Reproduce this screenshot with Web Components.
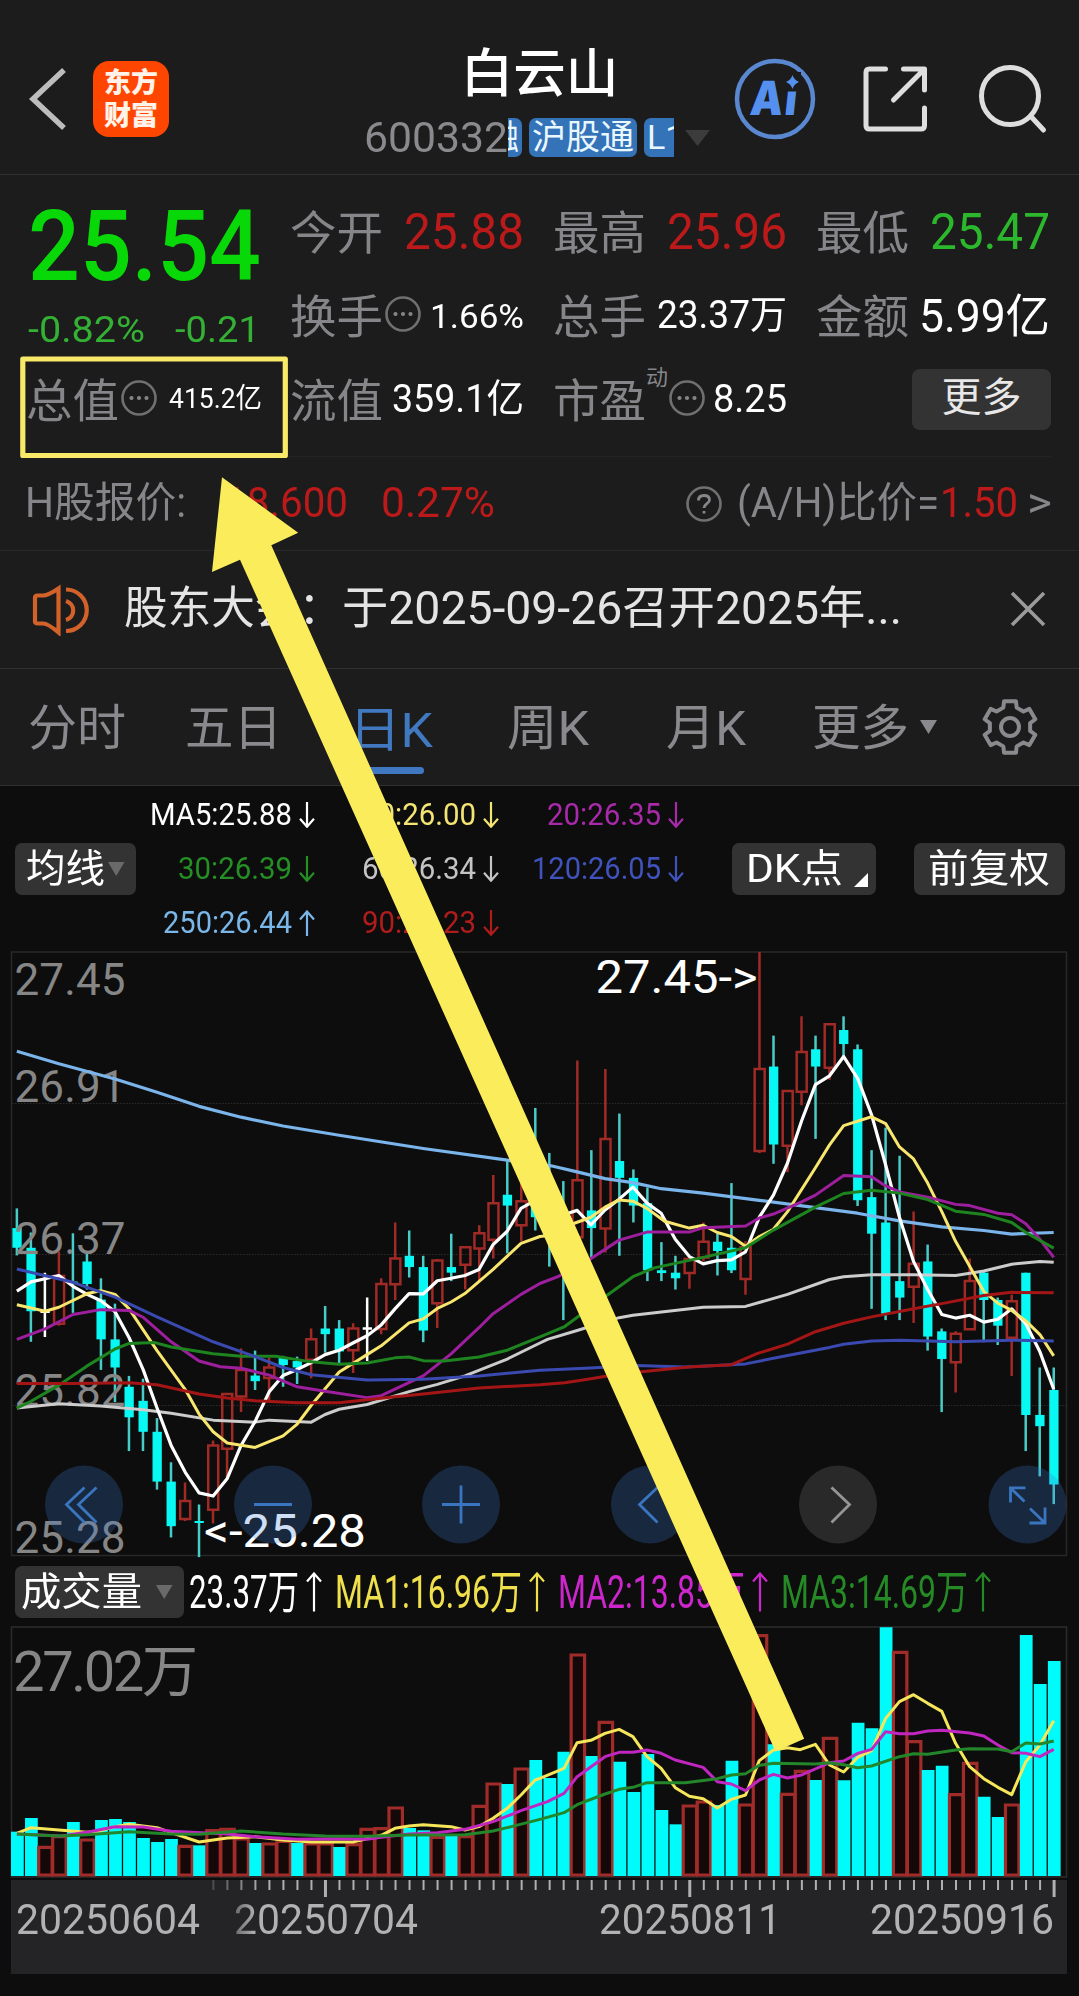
<!DOCTYPE html>
<html lang="zh-CN">
<head>
<meta charset="UTF-8">
<title>白云山 600332</title>
<style>
	body {
		margin: 0;
		background: #0d0d0d;
		font-family: Roboto, "Noto Sans CJK SC", sans-serif;
	}
</style>
</head>
<body>
<stock-page></stock-page>

<script>
// Text that is squeezed or stretched to a fixed width
class FitText extends HTMLElement {
	constructor() {
		super();
		this.attachShadow({ mode: 'open' });
	}

	connectedCallback() {
		const width = Number(this.getAttribute('w'));
		this.shadowRoot.innerHTML = `
		<style>
		:host { display: block; flex: none; width: ${width}px; line-height: 1; white-space: nowrap; }
		span { display: inline-block; transform-origin: 0 50%; vertical-align: top; }
		</style>
		<span><slot></slot></span>
		`;
		const span = this.shadowRoot.querySelector('span');
		const real = span.getBoundingClientRect().width;
		if (real > 0) {
			span.style.transform = `scaleX(${width / real})`;
		}
	}
}

class StockHeader extends HTMLElement {
	constructor() {
		super();
		this.attachShadow({ mode: 'open' });
	}

	connectedCallback() {
		this.shadowRoot.innerHTML = `
		<style>
		:host { display: flex; height: 174px; background: #1c1c1c; border-bottom: 1px solid #303030; }
		svg { display: block; flex: none; }
		.back { margin: 64px 0 0 27px; }
		.logo {
			width: 76px; height: 76px; margin: 61px 0 0 24px; box-sizing: border-box; padding-top: 6px;
			border-radius: 16px; background: #ff4600; color: #fff3ea;
			font-weight: 900; font-size: 27px; line-height: 33px; text-align: center;
		}
		.name { width: 347px; margin-left: 197px; padding-top: 48px; display: flex; flex-direction: column; align-items: center; }
		.name h1 { margin: 0; color: #fff; font-size: 52.500px; line-height: 52px; font-weight: 500; }
		.sub { display: flex; align-items: center; width: 100%; height: 39px; margin-top: 18px; }
		.code { font-size: 43px; color: #8a8a8e; margin-left: -2px; }
		.tags { width: 166px; height: 39px; overflow: hidden; display: flex; gap: 7px; }
		.tag { flex: none; box-sizing: border-box; height: 39px; padding: 0 3px; border-radius: 7px; background: #3573b9; color: #e9f7ff; font-size: 34px; line-height: 38px; }
		.tag:first-child { margin-left: -26px; }
		.tag:last-child { padding-left: 3px; }
		.down { margin-left: 11px; }
		.ai { margin: 58px 0 0 21px; }
		.share { margin: 64px 0 0 46px; }
		.search { margin: 62px 0 0 45px; }
		</style>
		<svg class="back" width="42" height="70" viewBox="0 0 42 70"><path d="M37 6 6 35 37 64" fill="none" stroke="#bdbdbd" stroke-width="5.500"/></svg>
		<div class="logo">东方<br>财富</div>
		<div class="name">
			<h1>白云山</h1>
			<div class="sub">
				<fit-text class="code" w="144">600332</fit-text>
				<div class="tags"><div class="tag">融</div><div class="tag">沪股通</div><div class="tag">L1</div></div>
				<svg class="down" width="26" height="18"><path d="M0 1h25L12.500 17z" fill="#3c3c3c"/></svg>
			</div>
		</div>
		<svg class="ai" width="82" height="82" viewBox="0 0 82 82">
			<circle cx="41" cy="41" r="38" fill="none" stroke="#5a88d0" stroke-width="4.500"/>
			<text transform="translate(15 57) skewX(-6) scale(.88 1)" font-family="Inter" font-weight="900" font-size="47" fill="#5590ee">A<tspan dx="2">i</tspan></text>
			<path d="M49 14h18v19.500H49z" fill="#1c1c1c"/>
			<path d="M58.500 17q1.500 5 6.500 7q-5 2-6.500 7q-1.500-5-6.500-7q5-2 6.500-7z" fill="#5590ee"/>
		</svg>
		<svg class="share" width="70" height="70" viewBox="0 0 70 70" fill="none" stroke="#dedede" stroke-width="5" stroke-linecap="round" stroke-linejoin="round">
			<path d="M23.500 5H7.500Q4 5 4 8.500V61.500Q4 65 7.500 65H59Q62.500 65 62.500 61.500V44M41.500 5H62.500V26M61.500 6 31.500 36"/>
		</svg>
		<svg class="search" width="72" height="74" viewBox="0 0 72 74" fill="none" stroke="#dedede" stroke-width="5" stroke-linecap="round">
			<circle cx="33" cy="34" r="28.500"/><path d="M53.500 54 66.500 68"/>
		</svg>
		`;
	}
}

// Small round icon with three dots or a question mark
class HintIcon extends HTMLElement {
	constructor() {
		super();
		this.attachShadow({ mode: 'open' });
	}

	connectedCallback() {
		const mark = this.hasAttribute('question')
			? '<path d="M13.500 15.500q0-5 5.500-5t5.500 4.500c0 3.500-5.500 4-5.500 8M19 26v2.500" fill="none" stroke="#86868a" stroke-width="2.800"/>'
			: '<g fill="#86868a"><circle cx="11.500" cy="19" r="2.100"/><circle cx="19" cy="19" r="2.100"/><circle cx="26.500" cy="19" r="2.100"/></g>';
		this.shadowRoot.innerHTML = `
		<style>
		:host { display: block; flex: none; width: 38px; height: 38px; }
		</style>
		<svg width="38" height="38"><circle cx="19" cy="19" r="16.500" fill="none" stroke="#707072" stroke-width="2.600"/>${mark}</svg>
		`;
	}
}

// One label with its value at the right end
class QuoteItem extends HTMLElement {
	constructor() {
		super();
		this.attachShadow({ mode: 'open' });
	}

	connectedCallback() {
		const sup = this.getAttribute('sup');
		this.shadowRoot.innerHTML = `
		<style>
		:host { display: flex; align-items: center; height: 84px; color: #fff; }
		.label { font-size: 46px; color: #86868a; padding-top: 3px; margin-left: -2px; }
		.sup { align-self: flex-start; font-size: 22px; line-height: 1; color: #86868a; margin: 10px -1px 0 0; }
		hint-icon { margin: -3px 0 0 1px; }
		.value { margin-left: auto; padding-top: 1px; }
		</style>
		<fit-text class="label" w="93">${this.getAttribute('label')}</fit-text>
		${sup ? `<span class="sup">${sup}</span>` : ''}
		${this.hasAttribute('hint') ? '<hint-icon></hint-icon>' : ''}
		<div class="value"><slot></slot></div>
		`;
	}
}

class QuotePanel extends HTMLElement {
	constructor() {
		super();
		this.attachShadow({ mode: 'open' });
	}

	connectedCallback() {
		this.shadowRoot.innerHTML = `
		<style>
		:host { display: block; background: #1c1c1c; height: 376px; border-bottom: 1px solid #282828; box-sizing: border-box; }
		.top { display: flex; gap: 30px; height: 281px; padding: 14px 28px 0; box-sizing: border-box; }
		.left { width: 234px; }
		.price { height: 112px; display: flex; align-items: center; font-size: 98px; font-weight: 500; color: #08d808; padding-top: 3px; box-sizing: border-box; }
		.change { height: 56px; display: flex; align-items: center; justify-content: space-between; font-size: 37.500px; color: #34b034; padding-right: 2px; padding-top: 1px; box-sizing: border-box; }
		.grid { display: grid; grid-template-columns: repeat(3, 232px); grid-auto-rows: 84px; align-content: start; column-gap: 31px; }
		.up { color: #bc1a1a; }
		.down { color: #2cb82c; }
		.more { justify-self: end; align-self: center; width: 139px; height: 61px; margin-right: -1px; border-radius: 8px; background: #333; color: #e8e8e8; font-size: 40px; line-height: 58px; text-align: center; }
		.h { display: flex; align-items: center; height: 92px; margin: 0 27px; border-top: 1px solid #222; font-size: 42px; color: #86868a; }
		</style>
		<div class="top">
			<div class="left">
				<div class="price"><fit-text w="233">25.54</fit-text></div>
				<div class="change"><fit-text w="117">-0.82%</fit-text><fit-text w="85">-0.21</fit-text></div>
				<quote-item label="总值" hint><fit-text w="93" style="font-size:28.500px">415.2亿</fit-text></quote-item>
			</div>
			<div class="grid">
				<quote-item label="今开"><fit-text class="up" w="120" style="font-size:50px">25.88</fit-text></quote-item>
				<quote-item label="最高"><fit-text class="up" w="120" style="font-size:50px">25.96</fit-text></quote-item>
				<quote-item label="最低"><fit-text class="down" w="120" style="font-size:50px">25.47</fit-text></quote-item>
				<quote-item label="换手" hint><fit-text w="94" style="font-size:34px">1.66%</fit-text></quote-item>
				<quote-item label="总手"><fit-text w="130" style="font-size:39px">23.37万</fit-text></quote-item>
				<quote-item label="金额"><fit-text w="131" style="font-size:46px">5.99亿</fit-text></quote-item>
				<quote-item label="流值"><fit-text w="132" style="font-size:39px">359.1亿</fit-text></quote-item>
				<quote-item label="市盈" sup="动" hint><fit-text w="74" style="font-size:39px">8.25</fit-text></quote-item>
				<div class="more">更多</div>
			</div>
		</div>
		<div class="h">
			<fit-text w="161" style="margin-left:-2px">H股报价:</fit-text>
			<fit-text class="up" w="124" style="margin-left:38px">18.600</fit-text>
			<fit-text class="up" w="114" style="margin-left:33px">0.27%</fit-text>
			<hint-icon question style="margin-left:auto"></hint-icon>
			<fit-text w="202" style="margin-left:14px">(A/H)比价=</fit-text>
			<fit-text class="up" w="78" style="margin-left:1px">1.50</fit-text>
			<fit-text w="25" style="margin-left:9px">&gt;</fit-text>
		</div>
		`;
	}
}

class NoticeBar extends HTMLElement {
	constructor() {
		super();
		this.attachShadow({ mode: 'open' });
	}

	connectedCallback() {
		this.shadowRoot.innerHTML = `
		<style>
		:host { display: flex; align-items: center; height: 117px; background: #1c1c1c; border-bottom: 1px solid #303030; }
		.horn { margin-left: 30px; }
		.text { display: flex; margin: -2px 0 0 32px; font-size: 45.500px; color: #e4e4e4; }
		.close { margin: -1px 32px 0 auto; }
		</style>
		<svg class="horn" width="62" height="52" viewBox="0 0 62 52" fill="none" stroke="#d2622a" stroke-width="4.200">
			<path d="M5 13.500Q5 11.500 8 11.500H13Q18 11.500 28.500 4.500V48.500Q18 39.500 13 39.500H8Q5 39.500 5 37.500Z"/>
			<path d="M36 17A10.500 10 0 0 1 36 36M36 5.500A20.500 20.500 0 0 1 36 47"/>
		</svg>
		<div class="text">
			<fit-text w="218">股东大会：</fit-text>
			<fit-text w="560">于2025-09-26召开2025年...</fit-text>
		</div>
		<svg class="close" width="38" height="38" stroke="#9a9a9a" stroke-width="3.600"><path d="M3 3 35 35M35 3 3 35"/></svg>
		`;
	}
}

class PeriodTabs extends HTMLElement {
	constructor() {
		super();
		this.attachShadow({ mode: 'open' });
	}

	gear() {
		const points = [];
		for (let k = 0; k < 6; k++) {
			[[-19, 20.5], [-13, 26.5], [13, 26.5], [19, 20.5]].forEach(([turn, r]) => {
				const a = (k * 60 - 90 + turn) * Math.PI / 180;
				points.push(`${30 + r * Math.cos(a)},${30 + r * Math.sin(a)}`);
			});
		}
		return points.join(' ');
	}

	connectedCallback() {
		this.shadowRoot.innerHTML = `
		<style>
		:host { display: flex; align-items: center; height: 116px; background: #1c1c1c; border-bottom: 1px solid #303030; font-size: 48.500px; color: #8a8a8e; }
		fit-text { padding-top: 4px; }
		.active { color: #4079c0; }
		.box { display: flex; flex-direction: column; align-items: center; padding-top: 23px; }
		.box i { width: 66px; height: 7px; margin-top: 12px; border-radius: 4px; background: #3f78c0; }
		.arrow { margin-left: 11px; }
		.gear { margin-left: 42px; }
		</style>
		<fit-text w="98" style="margin-left:28px">分时</fit-text>
		<fit-text w="97" style="margin-left:59px">五日</fit-text>
		<div class="box active" style="margin-left:67px"><fit-text w="84">日K</fit-text><i></i></div>
		<fit-text w="82" style="margin-left:74px">周K</fit-text>
		<fit-text w="80" style="margin-left:77px">月K</fit-text>
		<fit-text w="97" style="margin-left:66px">更多</fit-text>
		<svg class="arrow" width="18" height="14"><path d="M0 0h17L8.500 14z" fill="#8a8a8e"/></svg>
		<svg class="gear" width="60" height="60" fill="none" stroke="#8a8a8e" stroke-width="4" stroke-linejoin="round">
			<polygon points="${this.gear()}"/><circle cx="30" cy="30" r="9"/>
		</svg>
		`;
	}
}

// Dark grey button, arrow = "down" or "corner"
class ChipButton extends HTMLElement {
	constructor() {
		super();
		this.attachShadow({ mode: 'open' });
	}

	connectedCallback() {
		const arrow = this.getAttribute('arrow');
		this.shadowRoot.innerHTML = `
		<style>
		:host { display: flex; flex: none; align-items: center; box-sizing: border-box; height: 52px; border-radius: 7px; background: #333; color: #fff; font-size: 39px; }
		.corner { align-self: flex-end; margin: 0 0 8px auto; }
		.down { margin-left: auto; }
		</style>
		<slot></slot>
		${arrow === 'down' ? '<svg class="down" width="17" height="14"><path d="M0 0h16.500L8.200 14z" fill="#6a6a6a"/></svg>' : ''}
		${arrow === 'corner' ? '<svg class="corner" width="14" height="14"><path d="M0 14 14 0V14z" fill="#fff"/></svg>' : ''}
		`;
	}
}

// Value followed by a thin trend arrow
class TrendValue extends HTMLElement {
	constructor() {
		super();
		this.attachShadow({ mode: 'open' });
	}

	connectedCallback() {
		const size = Number(this.getAttribute('size') || 30.5);
		const h = size * 0.86;
		const head = this.getAttribute('dir') === 'up'
			? `M1 9.5 8 1.500 15 9.500M8 2V${h}`
			: `M1 ${h - 9.5} 8 ${h - 1.5} 15 ${h - 9.5}M8 ${h - 2}V0`;
		this.shadowRoot.innerHTML = `
		<style>
		:host { display: flex; align-items: center; justify-content: flex-end; font-size: ${size}px; }
		svg { margin-left: 7px; flex: none; }
		</style>
		<fit-text w="${this.getAttribute('w')}"><slot></slot></fit-text>
		<svg width="16" height="${h}" fill="none" stroke="currentColor" stroke-width="2.200"><path d="${head}"/></svg>
		`;
	}
}

class MaPanel extends HTMLElement {
	constructor() {
		super();
		this.attachShadow({ mode: 'open' });
	}

	connectedCallback() {
		this.shadowRoot.innerHTML = `
		<style>
		:host { display: flex; align-items: center; height: 154px; padding-top: 12px; box-sizing: border-box; }
		.list { display: grid; grid-template-columns: 179px 184px 185px; grid-auto-rows: 54px; width: 548px; }
		</style>
		<chip-button arrow="down" style="width:121px;margin-left:15px;padding:0 11px 0 11px"><fit-text w="79">均线</fit-text></chip-button>
		<div class="list">
			<trend-value w="142" style="color:#fff">MA5:25.88</trend-value>
			<trend-value w="114" style="color:#f3e474">10:26.00</trend-value>
			<trend-value w="114" style="color:#a82aa8">20:26.35</trend-value>
			<trend-value w="114" style="color:#258f25">30:26.39</trend-value>
			<trend-value w="114" style="color:#c4c4c4">60:26.34</trend-value>
			<trend-value w="129" style="color:#4052bc">120:26.05</trend-value>
			<trend-value w="129" dir="up" style="color:#7ab6e8">250:26.44</trend-value>
			<trend-value w="114" style="color:#b01c1c">90:26.23</trend-value>
		</div>
		<chip-button arrow="corner" style="width:144px;margin-left:48px;padding:0 8px 0 14px"><fit-text w="97">DK点</fit-text></chip-button>
		<chip-button style="width:151px;margin-left:38px;padding-left:14px"><fit-text w="122">前复权</fit-text></chip-button>
		`;
	}
}

const STEP = 40.69;
const FIRST = 49;

// kind, high, low, body top, body bottom; d = falling, u = rising, w = flat
const CANDLES = [
	['d', 668, 785, 717, 766], ['d', 728, 1000, 766, 924], ['w', 828, 988, 925, 925], ['u', 775, 960, 836, 955],
	['d', 730, 928, 850, 854], ['d', 778, 870, 800, 856], ['d', 842, 1070, 895, 994], ['d', 905, 1150, 994, 1064],
	['d', 1085, 1272, 1112, 1188], ['d', 1092, 1272, 1147, 1224], ['d', 1190, 1368, 1224, 1348], ['d', 1300, 1487, 1348, 1459],
	['u', 1350, 1446, 1396, 1441], ['d', 1405, 1536, 1446, 1451], ['u', 1246, 1452, 1258, 1418], ['u', 1128, 1340, 1130, 1266],
	['u', 1017, 1175, 1070, 1136], ['d', 1022, 1120, 1084, 1098], ['u', 1040, 1145, 1064, 1090], ['d', 1035, 1112, 1040, 1058],
	['d', 1037, 1105, 1048, 1064], ['u', 967, 1091, 994, 1045], ['d', 911, 1027, 967, 981], ['d', 946, 1055, 967, 1024],
	['u', 954, 1078, 967, 1021], ['w', 890, 1048, 967, 967], ['u', 842, 981, 856, 968], ['u', 703, 896, 793, 857],
	['d', 723, 840, 786, 814], ['d', 786, 1001, 814, 972], ['u', 794, 966, 798, 904], ['d', 731, 849, 814, 828],
	['u', 762, 870, 765, 808], ['u', 710, 850, 730, 768], ['u', 585, 793, 655, 746], ['d', 547, 780, 634, 661],
	['u', 590, 750, 650, 710], ['d', 418, 723, 650, 690], ['d', 530, 813, 620, 700], ['d', 600, 946, 690, 800],
	['u', 300, 760, 598, 740], ['d', 523, 790, 673, 717], ['u', 321, 778, 495, 718], ['d', 432, 786, 550, 592],
	['d', 571, 703, 592, 661], ['d', 616, 849, 655, 822], ['d', 752, 849, 822, 829], ['d', 786, 870, 828, 842],
	['u', 790, 868, 794, 829], ['u', 703, 800, 751, 790], ['d', 730, 835, 751, 774], ['d', 605, 829, 766, 822],
	['u', 750, 883, 765, 844], ['u', 30, 530, 321, 525], ['d', 238, 557, 315, 509], ['u', 375, 578, 376, 512],
	['u', 190, 411, 279, 378], ['d', 238, 495, 272, 315], ['u', 208, 348, 210, 318], ['d', 190, 290, 224, 259],
	['d', 260, 662, 272, 648], ['d', 523, 918, 640, 731], ['d', 467, 946, 703, 931], ['d', 537, 946, 849, 890],
	['u', 676, 953, 806, 863], ['d', 758, 1022, 800, 987], ['d', 967, 1175, 974, 1043], ['u', 974, 1126, 980, 1051],
	['u', 793, 970, 849, 969], ['d', 822, 1001, 828, 896], ['d', 890, 1008, 896, 960], ['u', 883, 1085, 899, 990],
	['d', 828, 1272, 828, 1182], ['d', 1064, 1335, 1182, 1210], ['d', 1064, 1404, 1120, 1355]
];

const PRICE_LINES = [
	['#7ab4ea', 3.2, '49,277 171,308 334,346 456,379 578,414 700,441 822,463 985,486 1229,519 1473,548 1600,562 1676,577 1757,594 1838,604 1920,619 2042,630 2205,648 2368,666 2490,680 2612,699 2735,714 2857,723 2938,732 3060,728'],
	['#ccc', 3, '49,1165 171,1154 293,1160 416,1169 497,1178 619,1195 741,1200 782,1195 904,1200 944,1181 985,1168 1066,1156 1188,1124 1270,1106 1350,1085 1473,1043 1568,1003 1590,994 1676,972 1798,940 1838,934 2042,914 2165,912 2287,882 2409,845 2450,838 2531,833 2653,833 2775,835 2857,824 2938,807 3020,800 3060,802'],
	['#fff', 3.2, '49,874 90,851 131,843 171,835 212,862 253,882 293,898 334,925 375,990 416,1070 456,1165 497,1258 538,1325 578,1376 619,1384 660,1340 700,1258 741,1198 782,1124 822,1084 863,1069 904,1052 944,1032 985,1021 1025,1003 1066,985 1107,958 1147,918 1188,880 1229,881 1270,848 1310,842 1350,835 1391,820 1432,758 1473,725 1513,668 1540,655 1594,690 1650,680 1676,673 1716,709 1757,672 1798,645 1838,615 1879,655 1920,680 1961,745 2002,788 2042,806 2083,798 2124,796 2165,776 2205,690 2246,635 2287,555 2328,450 2368,360 2409,338 2450,290 2491,345 2531,435 2572,560 2612,690 2653,800 2694,870 2735,932 2775,941 2816,934 2857,951 2898,944 2938,918 2979,955 3020,1025 3060,1118'],
	['#f8e66e', 3, '49,908 131,924 171,914 253,880 293,873 334,882 375,918 456,1022 538,1119 578,1180 619,1224 660,1252 741,1263 822,1234 863,1205 904,1158 985,1075 1066,1032 1107,1010 1188,953 1229,943 1270,917 1310,901 1350,880 1432,820 1513,755 1568,738 1600,735 1668,705 1716,690 1757,665 1798,647 1838,650 1879,668 1930,700 2002,717 2042,710 2083,728 2124,738 2165,762 2205,738 2246,720 2287,676 2368,567 2409,510 2450,462 2531,440 2572,457 2612,515 2653,545 2694,605 2735,676 2775,750 2816,812 2857,875 2898,904 2938,922 2979,948 3020,982 3060,1035'],
	['#9e1f9e', 3, '49,994 131,968 212,932 293,920 375,922 416,939 497,1000 578,1048 640,1062 700,1066 782,1083 863,1112 944,1123 1066,1139 1107,1134 1229,1085 1310,1030 1391,965 1432,930 1513,882 1568,855 1620,838 1700,802 1798,747 1879,727 2002,727 2042,716 2165,712 2205,692 2246,682 2328,652 2368,635 2450,586 2531,589 2572,612 2612,627 2694,640 2775,658 2816,661 2898,680 2938,684 2979,706 3020,745 3060,790'],
	['#1e8420', 3, '49,1165 90,1148 171,1108 253,1060 334,1018 375,1004 450,1002 497,1013 619,1030 700,1036 800,1036 904,1050 985,1056 1066,1053 1147,1040 1188,1038 1229,1047 1290,1048 1391,1038 1473,1021 1568,988 1640,962 1757,888 1838,838 1900,816 2042,790 2165,766 2246,722 2368,665 2450,631 2531,623 2612,630 2694,646 2775,675 2857,683 2938,703 2979,728 3060,767'],
	['#3a4ab0', 3, '49,819 212,852 334,889 456,938 619,1000 741,1037 822,1064 904,1082 1066,1095 1229,1093 1391,1085 1568,1071 1700,1066 1850,1059 1990,1063 2165,1055 2287,1034 2409,1014 2450,1006 2531,998 2612,996 2775,1000 2938,996 3060,998'],
	['#a41616', 3, '49,1104 212,1104 375,1102 456,1107 578,1130 660,1140 741,1147 863,1152 985,1152 1066,1144 1147,1137 1229,1130 1391,1115 1568,1107 1640,1102 1716,1092 1798,1080 2000,1063 2124,1057 2200,1029 2287,1006 2368,975 2450,954 2531,938 2653,918 2735,905 2857,885 2938,877 3060,878']
];

function polylines(lines) {
	return lines.map(([color, width, points]) =>
		`<polyline points="${points}" fill="none" stroke="${color}" stroke-width="${width}" stroke-linejoin="round"/>`).join('');
}

class PriceChart extends HTMLElement {
	constructor() {
		super();
		this.attachShadow({ mode: 'open' });
	}

	candles() {
		return CANDLES.map(([kind, high, low, top, bottom], i) => {
			const x = FIRST + i * STEP;
			if (kind === 'u') {
				return `<path d="M${x} ${high}V${top}M${x} ${bottom}V${low}M${x - 14} ${top}h29V${bottom}h-29z" fill="none" stroke="#a02a26" stroke-width="2.500"/>`;
			}
			if (kind === 'w') {
				return `<path d="M${x} ${high}V${low}M${x - 13} ${top}h27" stroke="#fff" stroke-width="2.500"/>`;
			}
			return `<path d="M${x} ${high}V${low}" stroke="#48ccc8" stroke-width="2.500"/><path d="M${x - 13} ${top}h27V${bottom}h-27z" fill="#08f8f4"/>`;
		}).join('');
	}

	connectedCallback() {
		const labels = [['27.45', 54.6], ['26.91', 162], ['26.37', 314.3], ['25.82', 465.5], ['25.28', 612.6]];
		this.shadowRoot.innerHTML = `
		<style>
		:host { display: block; height: 620px; }
		svg { display: block; }
		.data * { vector-effect: non-scaling-stroke; }
		</style>
		<svg width="1079" height="620" font-family="Roboto">
			<rect x="11.500" y="12" width="1055" height="603.500" fill="none" stroke="#282828" stroke-width="1.500"/>
			<path d="M12 163.500H1067M12 314.500H1067M12 465.500H1067" stroke="#2c2c2c" stroke-dasharray="1.500 1.500"/>
			<g class="data" transform="scale(.34435 .40178)">${this.candles()}</g>
			<g font-size="44" fill="#868686">${labels.map(([t, y]) => `<text x="14.500" y="${y}" textLength="111">${t}</text>`).join('')}</g>
			<g class="data" transform="scale(.34435 .40178)">${polylines(PRICE_LINES)}</g>
			<g font-size="45.500" fill="#fff">
				<text x="595.500" y="53" textLength="162" lengthAdjust="spacingAndGlyphs">27.45-&gt;</text>
				<text x="204" y="606.500" textLength="162" lengthAdjust="spacingAndGlyphs">&lt;-25.28</text>
			</g>
			<g fill="#3a7ad6" fill-opacity=".25">
				<circle cx="84" cy="564.500" r="39"/><circle cx="273" cy="564.500" r="39"/><circle cx="461" cy="564.500" r="39"/>
				<circle cx="650" cy="564.500" r="39"/><circle cx="1027.500" cy="564.500" r="39"/>
				<circle cx="838" cy="564.500" r="39" fill="#808080"/>
			</g>
			<g fill="none" stroke="#3a76c0" stroke-width="2.800">
				<path d="M84.500 547.500 66.500 564.500 84.500 582.500M96.500 547.500 78.500 564.500 96.500 582.500"/>
				<path d="M254 564.500h38M442 564.500h38M461 545.500v38M657.500 547.500 639.500 564.500 657.500 582.500"/>
				<path d="M1025.500 547.800H1010.500V562.500M1011 548.500 1024.500 561.500M1029.500 583H1045V567.500M1044.500 582.500 1030 568.500"/>
				<path d="M831.500 547.500 849.500 564.500 831.500 582.500" stroke="#969696"/>
			</g>
		</svg>
		`;
	}
}

const VOLUMES = ('815c 774c 858r 826r 786c 836r 780c 777c 786c 834c 846c 837c 855r 856c 808r 804r 833r 849c 848r 840r 849c 848r 848r 861c 850r '
	+ '804r 802r 740r 804c 811c 828r 828c 826r 735r 668r 672c 623r 600c 654c 575c 281r 588c 483r 605c 696c 582c 750c 793c 734r 722r '
	+ '735c 602c 731r 223r 553c 699r 630r 660c 531r 661c 488c 505c 202c 273r 541r 630c 617c 700r 606r 710c 771c 731r 225c 372c 303c').split(' ');

const VOLUME_LINES = [
	['#f6e65a', 3, '49,820 90,803 171,810 253,817 293,812 334,800 375,793 456,803 497,818 578,846 660,834 741,830 822,840 904,846 1025,846 1107,826 1147,805 1188,798 1229,794 1310,800 1350,810 1391,800 1432,775 1473,745 1513,705 1554,660 1568,655 1638,625 1676,548 1716,541 1757,520 1798,508 1838,530 1879,590 1920,625 1961,683 2002,709 2042,716 2083,744 2124,718 2165,705 2205,602 2246,570 2287,563 2324,569 2368,553 2409,615 2450,636 2491,592 2531,572 2572,475 2612,425 2653,404 2694,430 2735,454 2775,550 2816,620 2857,656 2898,682 2938,704 2979,605 3020,555 3060,482'],
	['#c026c0', 3, '49,822 180,828 260,815 334,800 416,801 497,814 660,822 741,830 863,838 985,836 1066,838 1107,832 1188,822 1270,818 1350,808 1432,785 1513,752 1590,725 1638,700 1676,650 1757,590 1798,577 1838,577 1879,570 1920,580 1961,600 2042,622 2083,665 2124,672 2165,692 2205,660 2246,643 2287,654 2328,645 2409,608 2450,603 2491,580 2531,568 2572,515 2612,521 2653,521 2694,513 2735,511 2816,519 2857,528 2898,555 2938,578 2979,580 3020,590 3060,568'],
	['#23862a', 3, '49,822 171,828 253,824 375,815 497,822 578,823 700,813 822,822 944,828 1066,829 1188,825 1350,824 1432,813 1473,803 1568,778 1638,758 1676,734 1757,702 1798,688 1838,682 1879,668 1990,668 2083,656 2124,645 2165,641 2205,616 2246,610 2368,612 2409,608 2450,614 2490,623 2531,618 2612,590 2653,581 2694,583 2775,570 2816,566 2898,567 2938,575 2979,549 3020,552 3060,543']
];

class VolumeChart extends HTMLElement {
	constructor() {
		super();
		this.attachShadow({ mode: 'open' });
	}

	bars() {
		return VOLUMES.map((item, i) => {
			const x = FIRST + i * STEP;
			const top = parseInt(item);
			if (item.endsWith('r')) {
				return `<path d="M${x - 18} ${top + 4}h39V945h-39z" fill="#140808" stroke="#a02c2a" stroke-width="3.200"/>`;
			}
			return `<path d="M${x - 17} ${top}h37V948h-37z" fill="#00fcfa"/>`;
		}).join('');
	}

	ticks() {
		let out = '';
		for (let i = 14; i < 75; i++) {
			const big = i === 22 || i === 48 || i === 74;
			const fade = Math.min(1, 0.3 + (i - 14) * 0.2);
			out += `<path d="M${17.2 + i * 14.012} 260v${big ? 17 : 10}" stroke="#b0b0b0" stroke-width="${big ? 3 : 2}" opacity="${fade}"/>`;
		}
		return out;
	}

	connectedCallback() {
		this.shadowRoot.innerHTML = `
		<style>
		:host { display: block; }
		svg { display: block; }
		.data * { vector-effect: non-scaling-stroke; }
		.head { display: flex; align-items: center; height: 60px; padding-left: 15px; box-sizing: border-box; }
		.head > * { margin-top: 4px; }
		.dates { display: flex; height: 74px; margin: 0 12px 0 11px; background: #242426; font-size: 42px; color: #b2b2b2; }
		.dates fit-text { margin-top: -1px; }
		.fade { background: linear-gradient(90deg, #6a6a6a, #b2b2b2 12%); -webkit-background-clip: text; color: transparent; }
		</style>
		<div class="head">
			<chip-button arrow="down" style="width:169px;padding:0 11px 0 6px"><fit-text w="121">成交量</fit-text></chip-button>
			<trend-value dir="up" size="46" w="110" style="color:#fff;margin-left:5px">23.37万</trend-value>
			<trend-value dir="up" size="46" w="187" style="color:#efe04c;margin-left:13px">MA1:16.96万</trend-value>
			<trend-value dir="up" size="46" w="187" style="color:#cc26cc;margin-left:13px">MA2:13.85万</trend-value>
			<trend-value dir="up" size="46" w="187" style="color:#258a25;margin-left:13px">MA3:14.69万</trend-value>
		</div>
		<svg width="1079" height="280">
			<rect x="11" y="260" width="1056" height="20" fill="#242426"/>
			<rect x="11.500" y="7" width="1055" height="250" fill="none" stroke="#2c2c2c" stroke-width="1.500"/>
			<text x="13" y="70.500" font-size="56" fill="#868686" textLength="185">27.02万</text>
			<g class="data" transform="translate(0 -60) scale(.34435 .33333)">${this.bars()}${polylines(VOLUME_LINES)}</g>
			${this.ticks()}
		</svg>
		<div class="dates">
			<fit-text w="184" style="margin-left:5px">20250604</fit-text>
			<fit-text w="184" style="margin-left:34px"><span class="fade">20250704</span></fit-text>
			<fit-text w="182" style="margin-left:181px">20250811</fit-text>
			<fit-text w="184" style="margin-left:89px">20250916</fit-text>
		</div>
		`;
	}
}

// Yellow frame and arrow drawn over the page
class MarkLayer extends HTMLElement {
	constructor() {
		super();
		this.attachShadow({ mode: 'open' });
	}

	connectedCallback() {
		this.shadowRoot.innerHTML = `
		<style>
		:host { display: block; position: absolute; left: 0; top: 0; pointer-events: none; }
		svg { display: block; }
		</style>
		<svg width="1079" height="1996">
			<rect x="22.800" y="359" width="262.500" height="96.500" fill="none" stroke="#f8ea68" stroke-width="5.200" stroke-linejoin="round"/>
			<polygon points="222,477.300 298.200,532.700 271.300,545.300 804.200,1738.700 775.500,1751.500 240,559.700 212,572" fill="#faec5a"/>
		</svg>
		`;
	}
}

class StockPage extends HTMLElement {
	constructor() {
		super();
		this.attachShadow({ mode: 'open' });
	}

	connectedCallback() {
		this.shadowRoot.innerHTML = `
		<style>
		:host { display: block; position: relative; width: 1079px; height: 1996px; overflow: hidden; background: #0d0d0d; }
		</style>
		<stock-header></stock-header>
		<quote-panel></quote-panel>
		<notice-bar></notice-bar>
		<period-tabs></period-tabs>
		<ma-panel></ma-panel>
		<price-chart></price-chart>
		<volume-chart></volume-chart>
		<mark-layer></mark-layer>
		`;
	}
}

customElements.define('fit-text', FitText);
customElements.define('hint-icon', HintIcon);
customElements.define('quote-item', QuoteItem);
customElements.define('chip-button', ChipButton);
customElements.define('trend-value', TrendValue);
customElements.define('stock-header', StockHeader);
customElements.define('quote-panel', QuotePanel);
customElements.define('notice-bar', NoticeBar);
customElements.define('period-tabs', PeriodTabs);
customElements.define('ma-panel', MaPanel);
customElements.define('price-chart', PriceChart);
customElements.define('volume-chart', VolumeChart);
customElements.define('mark-layer', MarkLayer);
customElements.define('stock-page', StockPage);
</script>
</body>
</html>
